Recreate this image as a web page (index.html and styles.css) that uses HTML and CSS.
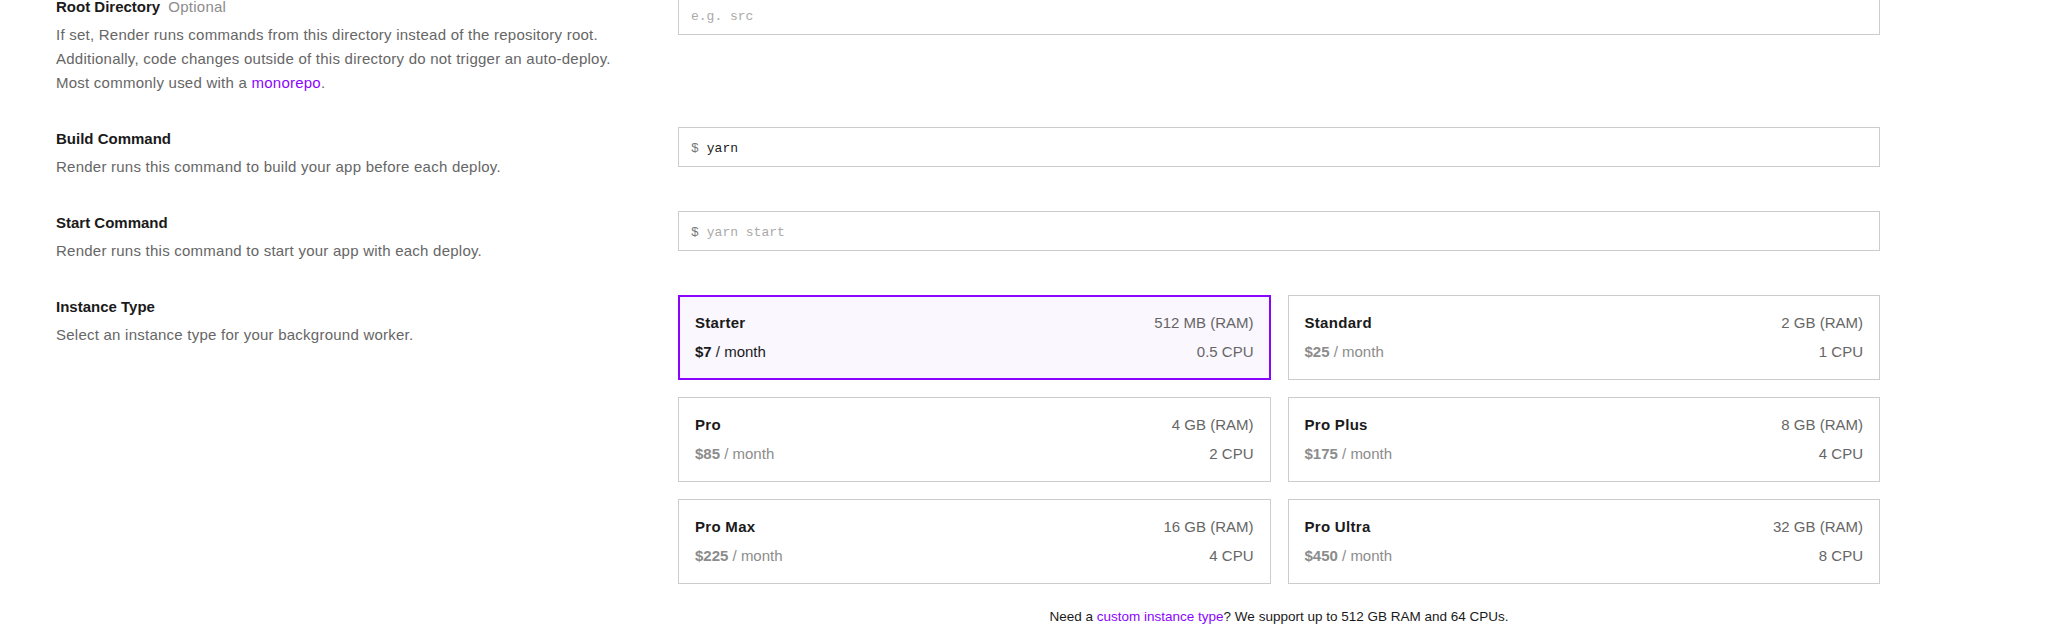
FILE: index.html
```html
<!DOCTYPE html>
<html lang="en">
<head>
<meta charset="utf-8">
<title>Advanced settings</title>
<link rel="stylesheet" href="styles.css">
</head>
<body>
<div class="page">
  <div class="row">
    <div class="info">
      <div class="label">Root Directory <span class="opt">Optional</span></div>
      <p class="desc">
        <span class="sentence">If set, Render runs commands from this directory instead of the repository root.</span>
        <span class="sentence">Additionally, code changes outside of this directory do not trigger an auto-deploy.</span>
        <span class="sentence">Most commonly used with a <a class="link" href="#">monorepo</a>.</span>
      </p>
    </div>
    <div class="field">
      <div class="input"><span class="ph">e.g. src</span></div>
    </div>
  </div>

  <div class="row">
    <div class="info">
      <div class="label">Build Command</div>
      <p class="desc">Render runs this command to build your app before each deploy.</p>
    </div>
    <div class="field">
      <div class="input"><span class="prompt">$</span><span class="val">yarn</span></div>
    </div>
  </div>

  <div class="row">
    <div class="info">
      <div class="label">Start Command</div>
      <p class="desc">Render runs this command to start your app with each deploy.</p>
    </div>
    <div class="field">
      <div class="input"><span class="prompt">$</span><span class="ph">yarn start</span></div>
    </div>
  </div>

  <div class="row">
    <div class="info">
      <div class="label">Instance Type</div>
      <p class="desc">Select an instance type for your background worker.</p>
    </div>
    <div class="field">
      <div class="cards">
        <div class="card selected">
          <div class="line"><span class="name">Starter</span><span class="spec">512 MB (RAM)</span></div>
          <div class="line"><span class="price"><b>$7</b> / month</span><span class="spec">0.5 CPU</span></div>
        </div>
        <div class="card">
          <div class="line"><span class="name">Standard</span><span class="spec">2 GB (RAM)</span></div>
          <div class="line"><span class="price"><b>$25</b> / month</span><span class="spec">1 CPU</span></div>
        </div>
        <div class="card">
          <div class="line"><span class="name">Pro</span><span class="spec">4 GB (RAM)</span></div>
          <div class="line"><span class="price"><b>$85</b> / month</span><span class="spec">2 CPU</span></div>
        </div>
        <div class="card">
          <div class="line"><span class="name">Pro Plus</span><span class="spec">8 GB (RAM)</span></div>
          <div class="line"><span class="price"><b>$175</b> / month</span><span class="spec">4 CPU</span></div>
        </div>
        <div class="card">
          <div class="line"><span class="name">Pro Max</span><span class="spec">16 GB (RAM)</span></div>
          <div class="line"><span class="price"><b>$225</b> / month</span><span class="spec">4 CPU</span></div>
        </div>
        <div class="card">
          <div class="line"><span class="name">Pro Ultra</span><span class="spec">32 GB (RAM)</span></div>
          <div class="line"><span class="price"><b>$450</b> / month</span><span class="spec">8 CPU</span></div>
        </div>
      </div>
      <p class="note">Need a <a class="link" href="#">custom instance type</a>? We support up to 512 GB RAM and 64 CPUs.</p>
    </div>
  </div>
</div>
</body>
</html>
```
FILE: styles.css
```css
html, body {
  margin: 0;
  padding: 0;
  background: #ffffff;
}
body {
  font-family: "Liberation Sans", Arial, sans-serif;
  color: #1a1a1a;
  font-size: 15px;
  line-height: 24px;
}
.page {
  margin-top: -5px;
  padding-left: 56px;
  display: flex;
  flex-direction: column;
  gap: 32px;
}
.row {
  display: grid;
  grid-template-columns: 580px 1202px;
  column-gap: 42px;
  align-items: start;
}
.label {
  font-weight: bold;
  color: #1a1a1a;
}
.opt {
  font-weight: normal;
  color: #8c8c8c;
  margin-left: 4px;
  letter-spacing: 0.24px;
}
.desc {
  margin: 4px 0 0;
  color: #666666;
  letter-spacing: 0.24px;
}
.sentence {
  display: block;
}
.link {
  color: #8a05ff;
  text-decoration: none;
}
.input {
  box-sizing: border-box;
  height: 40px;
  border: 1px solid #cccccc;
  display: flex;
  align-items: center;
  padding: 3px 12px 0;
  font-family: "Liberation Mono", "Courier New", monospace;
  font-size: 13px;
  gap: 8px;
}
.prompt {
  color: #777777;
}
.val {
  color: #1a1a1a;
}
.ph {
  color: #aaaaaa;
}
.cards {
  display: grid;
  grid-template-columns: 1fr 1fr;
  gap: 17px;
}
.card {
  border: 1px solid #cccccc;
  padding: 15px 16px;
  display: flex;
  flex-direction: column;
  gap: 5px;
}
.card.selected {
  border-color: #8a05ff;
  box-shadow: inset 0 0 0 1px #8a05ff;
  background: #faf7ff;
}
.line {
  display: flex;
  justify-content: space-between;
}
.name {
  font-weight: bold;
  color: #1a1a1a;
  letter-spacing: 0.3px;
}
.spec {
  color: #666666;
}
.price {
  color: #8c8c8c;
}
.price b {
  font-weight: bold;
}
.selected .price {
  color: #1a1a1a;
}
.note {
  margin: 21px 0 0;
  text-align: center;
  font-size: 13.5px;
  color: #1a1a1a;
}
```
